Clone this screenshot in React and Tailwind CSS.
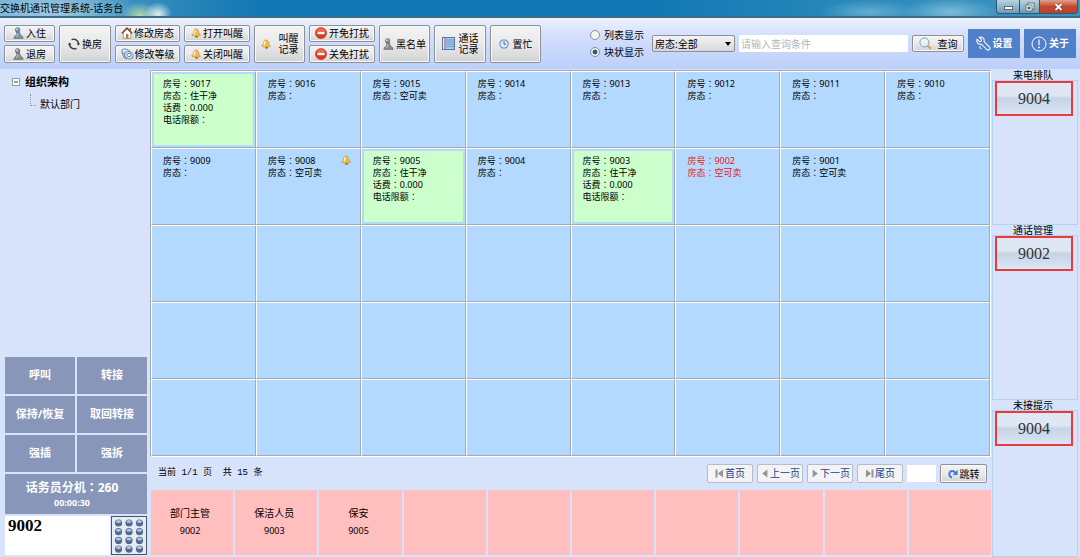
import { useState } from 'react';

const rooms = [
  { no: '9017', state: '住干净', fee: '0.000', occupied: true },
  { no: '9016', state: '' },
  { no: '9015', state: '空可卖' },
  { no: '9014', state: '' },
  { no: '9013', state: '' },
  { no: '9012', state: '' },
  { no: '9011', state: '' },
  { no: '9010', state: '' },
  { no: '9009', state: '' },
  { no: '9008', state: '空可卖', alarm: true },
  { no: '9005', state: '住干净', fee: '0.000', occupied: true },
  { no: '9004', state: '' },
  { no: '9003', state: '住干净', fee: '0.000', occupied: true },
  { no: '9002', state: '空可卖', busy: true },
  { no: '9001', state: '空可卖' },
];

const contacts = [
  { name: '部门主管', ext: '9002' },
  { name: '保洁人员', ext: '9003' },
  { name: '保安', ext: '9005' },
];

const callActions = ['呼叫', '转接', '保持/恢复', '取回转接', '强插', '强拆'];

function PersonIcon({ color }) {
  return (
    <svg width="11" height="12" viewBox="0 0 11 12" className="shrink-0">
      <path d="M3.6 5 C4.2 7 3.2 8.2 1.6 9.4 L0.8 11.4 H10.2 L9.6 9.6 C7.8 8.6 7 7 6.4 4.8 Z" fill={color} stroke="#46525a" strokeWidth="0.5" />
      <circle cx="4.6" cy="2.9" r="2.3" fill={color} stroke="#46525a" strokeWidth="0.5" />
      <circle cx="3.9" cy="2.2" r="0.9" fill="#fff" opacity="0.7" />
      <path d="M4.9 6 C5 7.6 4.4 8.8 3.2 10" stroke="#fff" strokeWidth="0.9" fill="none" opacity="0.6" />
    </svg>
  );
}

function BellIcon() {
  return (
    <svg width="10" height="10" viewBox="0 0 10 10" className="shrink-0">
      <circle cx="5.6" cy="8.4" r="1.3" fill="#8a4f12" />
      <path d="M5 0.8 C3 1 2.6 3 2.4 4.8 L0.6 7 C2.4 8.4 7.4 8.6 9.5 7.4 L8 5 C7.8 3 7 0.9 5 0.8 Z" fill="#efbd4a" stroke="#b98428" strokeWidth="0.5" />
      <path d="M4.3 2 C3.6 3 3.7 4.6 3 6.2" stroke="#fff6cf" strokeWidth="1.3" fill="none" />
    </svg>
  );
}

function SwapIcon() {
  return (
    <svg width="12" height="12" viewBox="0 0 12 12" className="shrink-0" fill="none" stroke="#333" strokeWidth="1.4">
      <path d="M3.6 1.6 A5 5 0 0 1 10.6 5.6" />
      <path d="M8.4 10.4 A5 5 0 0 1 1.4 6.4" />
      <path d="M8.6 5.2 H12 L10.4 7.8 Z M0 6.8 H3.4 L1.6 4.2 Z" fill="#333" stroke="none" />
    </svg>
  );
}

function HomeIcon() {
  return (
    <svg width="12" height="12" viewBox="0 0 12 12" className="shrink-0">
      <path d="M2.2 5.6 V11.3 H9.8 V5.6 L6 2 Z" fill="#fff" stroke="#8d7350" strokeWidth="0.7" />
      <path d="M0.7 6.4 L6 1 L11.3 6.4" fill="none" stroke="#7a4a25" strokeWidth="1.4" />
      <path d="M8.6 1 H10 V4 L8.6 2.7 Z" fill="#9a5a32" />
      <rect x="5" y="7" width="2.4" height="4.2" fill="#b9772f" />
    </svg>
  );
}

function LevelIcon() {
  return (
    <svg width="13" height="12" viewBox="0 0 13 12" className="shrink-0" fill="#d5e3f2" stroke="#5f7fa5" strokeWidth="0.9">
      <ellipse cx="5" cy="4" rx="4.3" ry="2.8" transform="rotate(25 5 4)" />
      <path d="M0.9 4.6 L3 9.6 L6 10.8" />
      <ellipse cx="7.8" cy="7.2" rx="4.4" ry="3.6" transform="rotate(25 7.8 7.2)" />
      <ellipse cx="8" cy="7" rx="2.2" ry="1.6" fill="#f6faff" />
    </svg>
  );
}

function StopIcon() {
  return (
    <svg width="12" height="12" viewBox="0 0 12 12" className="shrink-0">
      <circle cx="6" cy="6" r="5.6" fill="#dc3a1c" stroke="#a82f16" strokeWidth="0.5" />
      <path d="M1.4 4.6 A4.8 4.8 0 0 1 10.6 4.6 Z" fill="#f0836a" opacity="0.7" />
      <rect x="2.4" y="4.8" width="7.2" height="2.4" fill="#fff" />
    </svg>
  );
}

function NotebookIcon() {
  return (
    <svg width="13" height="13" viewBox="0 0 13 13" className="shrink-0">
      <rect x="0.5" y="0.5" width="12" height="12" fill="#a9cbee" stroke="#5378a8" />
      <path d="M4 3 H12 M4 5.2 H12 M4 7.4 H12 M4 9.6 H12" stroke="#5c8cc4" strokeWidth="0.8" />
      <path d="M3 1 V12" stroke="#d2564a" strokeWidth="0.9" />
      <path d="M1.5 1 V12" stroke="#e6f1fc" />
    </svg>
  );
}

function ClockIcon() {
  return (
    <svg width="10" height="10" viewBox="0 0 10 10" className="shrink-0">
      <circle cx="5" cy="5" r="4.2" fill="#dfeafa" stroke="#7c98c6" strokeWidth="1.2" />
      <path d="M5 2.4 V5.2 H7" stroke="#38507e" fill="none" strokeWidth="0.9" />
    </svg>
  );
}

function SearchIcon() {
  return (
    <svg width="13" height="13" viewBox="0 0 13 13" className="shrink-0">
      <path d="M8.8 8.8 L11.8 11.8" stroke="#d2a542" strokeWidth="2.2" />
      <circle cx="5.4" cy="5.4" r="4.5" fill="#e4f1fb" stroke="#8b97a5" />
      <path d="M3 5 A2.6 2.6 0 0 1 5.6 2.8" stroke="#fff" fill="none" strokeWidth="1.2" />
    </svg>
  );
}

function WrenchIcon() {
  return (
    <svg width="15" height="15" viewBox="0 0 16 16" className="shrink-0" fill="none" stroke="#fff" strokeWidth="1.1" strokeLinejoin="round">
      <path d="M3.4 1.2 L6 3.8 L5.6 5.6 L3.8 6 L1.2 3.4 C0.2 6 1.8 8.8 4.6 8.9 L5.8 8.7 L11.4 14.4 C12.4 15.3 14 15 14.6 14 C15.1 13.2 14.9 12.2 14.2 11.5 L8.6 6 C9.4 2.8 6.6 0.2 3.4 1.2 Z" />
      <path d="M4.8 10.8 C3.6 12 4.4 13.6 5.8 13.4" />
    </svg>
  );
}

function AboutIcon() {
  return (
    <svg width="16" height="16" viewBox="0 0 16 16" className="shrink-0" fill="none" stroke="#fff">
      <circle cx="8" cy="8" r="7" strokeWidth="1" />
      <path d="M8 3.6 V9.2" strokeWidth="1.2" />
      <circle cx="8" cy="11.4" r="0.9" fill="#fff" stroke="none" />
    </svg>
  );
}

function PageIcon({ kind }) {
  return (
    <svg width="9" height="9" viewBox="0 0 9 9" className="shrink-0" fill="#959595">
      {kind === 'first' && <path d="M0.5 0.5 H2.5 V8.5 H0.5 Z M8 0.5 V8.5 L2.8 4.5 Z" />}
      {kind === 'prev' && <path d="M7.4 0.5 V8.5 L2.2 4.5 Z" />}
      {kind === 'next' && <path d="M2.6 0.5 V8.5 L7.8 4.5 Z" />}
      {kind === 'last' && <path d="M6.5 0.5 H8.5 V8.5 H6.5 Z M1 0.5 V8.5 L6.2 4.5 Z" />}
    </svg>
  );
}

function JumpIcon() {
  return (
    <svg width="10" height="10" viewBox="0 0 10 10" className="shrink-0">
      <path d="M4 8.6 C0.2 7.4 0.6 2 4.4 2 C6 2 6.8 3 7.4 4" fill="none" stroke="#3f78d8" strokeWidth="1.8" />
      <path d="M9.6 0.8 V6 H4.6 Z" fill="#3f78d8" />
    </svg>
  );
}

function KeypadIcon() {
  return (
    <svg width="32" height="36" viewBox="0 0 32 36">
      {[0, 1, 2, 3].map((row) =>
        [0, 1, 2].map((col) => (
          <g key={`${row}-${col}`}>
            <circle cx={5.5 + col * 10.5} cy={5 + row * 8.7} r="3.6" fill="#50698f" />
            <ellipse cx={5.5 + col * 10.5} cy={3.5 + row * 8.7} rx="2.5" ry="1.5" fill="#b4c4dc" />
          </g>
        ))
      )}
    </svg>
  );
}

function ToolButton({ icon, children, className = 'gap-0.5' }) {
  return (
    <button
      className={`flex items-center justify-center rounded-xs border border-[#8e9097] bg-linear-to-b from-[#f4f4f4] via-[#e9e9ea] to-[#d2d3d6] leading-3 whitespace-nowrap shadow-[inset_0_0_0_1px_#f8f8f8] ${className}`}
    >
      {icon}
      <span>{children}</span>
    </button>
  );
}

function TwoLines({ first, second }) {
  return (
    <span className="flex flex-col gap-px text-[10px] leading-[10px]">
      <span className="font-['Noto_Sans_CJK_SC',sans-serif]">{first}</span>
      <span className="font-['Noto_Sans_CJK_SC',sans-serif]">{second}</span>
    </span>
  );
}

function ButtonPair({ children, className }) {
  return <div className={`grid grid-rows-2 gap-[3px] ${className}`}>{children}</div>;
}

function TitleBar() {
  return (
    <header className="flex h-[18px] items-start justify-between border-b-2 border-[#3d6f8c] bg-[radial-gradient(ellipse_90px_24px_at_50px_10px,#a5cfe6,transparent),radial-gradient(ellipse_14px_12px_at_158px_14px,#e6f1f0,transparent),radial-gradient(ellipse_18px_14px_at_140px_16px,#b5dba8,transparent),radial-gradient(ellipse_50px_12px_at_870px_12px,#63add1,transparent),radial-gradient(ellipse_50px_14px_at_950px_12px,#7bbbd9,transparent),linear-gradient(to_right,#62a9cf,#2583b8_18%,#1277b3_24%,#1277b3_60%,#2b8abb_80%,#3d93bf)]">
      <h1 className="leading-4">交换机通讯管理系统-话务台</h1>
      <div className="mr-0.5 flex h-[14px] overflow-hidden rounded-b border border-t-0 border-[#34546a]">
        <button aria-label="最小化" className="flex w-[23px] items-end justify-center border-r border-[#34546a] bg-linear-to-b from-[#b8d3e1] to-[#719cb5] pb-[3px]">
          <span className="h-1 w-[9px] border border-[#5a6b77] bg-white"></span>
        </button>
        <button aria-label="还原" className="flex w-[20px] items-center justify-center border-r border-[#34546a] bg-linear-to-b from-[#b8d3e1] to-[#719cb5]">
          <svg width="10" height="10" viewBox="0 0 10 10" fill="#fff" stroke="#4d5c68" strokeWidth="0.8">
            <rect x="3" y="1" width="6" height="6" />
            <rect x="1" y="3" width="6" height="6" />
            <rect x="3" y="5" width="2" height="2" fill="#4d5c68" />
          </svg>
        </button>
        <button aria-label="关闭" className="flex w-[37px] items-center justify-center bg-linear-to-b from-[#dda08f] via-[#c5462c] to-[#b8452c]">
          <svg width="9" height="8" viewBox="0 0 9 8">
            <path d="M1.5 1 L7.5 7 M7.5 1 L1.5 7" stroke="#5d3a38" strokeWidth="3" />
            <path d="M1.5 1 L7.5 7 M7.5 1 L1.5 7" stroke="#fff" strokeWidth="1.8" />
          </svg>
        </button>
      </div>
    </header>
  );
}

function Toolbar() {
  const [view, setView] = useState('block');

  return (
    <div className="flex h-[52px] items-center border-b border-[#d7e3fb] bg-linear-to-b from-[#eef2fd] from-0% via-[#d3dffc] via-35% to-[#bccffa] pr-1 pl-1">
      <div className="flex h-[38px] gap-1">
        <ButtonPair className="w-[51px]">
          <ToolButton icon={<PersonIcon color="#6f9aa6" />}>入住</ToolButton>
          <ToolButton icon={<PersonIcon color="#8b8b8b" />}>退房</ToolButton>
        </ButtonPair>
        <ToolButton className="w-[52px] gap-0.5" icon={<SwapIcon />}>换房</ToolButton>
        <ButtonPair className="w-[65px]">
          <ToolButton className="gap-px" icon={<HomeIcon />}>修改房态</ToolButton>
          <ToolButton className="gap-px" icon={<LevelIcon />}>修改等级</ToolButton>
        </ButtonPair>
        <ButtonPair className="w-[66px]">
          <ToolButton icon={<BellIcon />}>打开叫醒</ToolButton>
          <ToolButton icon={<BellIcon />}>关闭叫醒</ToolButton>
        </ButtonPair>
        <ToolButton className="w-[51px] gap-2" icon={<BellIcon />}><TwoLines first="叫醒" second="记录" /></ToolButton>
        <ButtonPair className="w-[66px]">
          <ToolButton icon={<StopIcon />}>开免打扰</ToolButton>
          <ToolButton icon={<StopIcon />}>关免打扰</ToolButton>
        </ButtonPair>
        <ToolButton className="w-[51px] gap-0.5" icon={<PersonIcon color="#8b8b8b" />}>黑名单</ToolButton>
        <ToolButton className="w-[52px] gap-1" icon={<NotebookIcon />}><TwoLines first="通话" second="记录" /></ToolButton>
        <ToolButton className="w-[51px] gap-1" icon={<ClockIcon />}>置忙</ToolButton>
      </div>

      <fieldset className="ml-[49px] flex flex-col gap-1">
        <label className="flex items-center gap-1 leading-[13px]">
          <input type="radio" name="view" className="size-[10px] appearance-none rounded-full border border-[#8a8f98] bg-[#f2f2f2] checked:bg-[radial-gradient(circle,#2c5a74_35%,#e8eef2_50%)]" checked={view === 'list'} onChange={() => setView('list')} />
          列表显示
        </label>
        <label className="flex items-center gap-1 leading-[13px]">
          <input type="radio" name="view" className="size-[10px] appearance-none rounded-full border border-[#8a8f98] bg-[#f2f2f2] checked:bg-[radial-gradient(circle,#2c5a74_35%,#e8eef2_50%)]" checked={view === 'block'} onChange={() => setView('block')} />
          块状显示
        </label>
      </fieldset>

      <div className="ml-2 grid flex-1 grid-cols-[83px_1fr_52px] items-center gap-1">
        <div className="relative">
          <select aria-label="房态" className="h-[17px] w-full appearance-none rounded-xs border border-[#8e9097] bg-linear-to-b from-[#f4f4f4] to-[#d6d7da] pl-0.5 leading-[14px]">
            <option>房态:全部</option>
          </select>
          <svg width="6" height="4" viewBox="0 0 6 4" className="pointer-events-none absolute top-[7px] right-1">
            <path d="M0 0 H6 L3 4 Z" />
          </svg>
        </div>
        <input aria-label="查询条件" placeholder="请输入查询条件" className="h-[17px] w-full bg-white px-0.5 leading-[14px] placeholder:text-[#b5b5b5]" />
        <ToolButton className="h-[17px] gap-[6px]" icon={<SearchIcon />}>查询</ToolButton>
      </div>

      <div className="ml-1 flex gap-1 font-bold text-white">
        <button className="flex h-[29px] w-[52px] items-center justify-center gap-0.5 bg-[#5080ca]">
          <WrenchIcon />
          设置
        </button>
        <button className="flex h-[29px] w-[52px] items-center justify-center gap-0.5 bg-[#5080ca]">
          <AboutIcon />
          关于
        </button>
      </div>
    </div>
  );
}

function Sidebar() {
  return (
    <aside className="flex w-[150px] shrink-0 flex-col justify-between pr-[3px] pb-[2px] pl-[5px]">
      <div className="pt-1 pl-[7px]">
        <div className="flex items-center gap-[5px] text-[11px] leading-4 font-bold">
          <svg width="8" height="8" viewBox="0 0 8 8">
            <rect x="0.5" y="0.5" width="7" height="7" fill="#fff" stroke="#9a9a9a" />
            <path d="M2 4 H6" stroke="#333" />
          </svg>
          组织架构
        </div>
        <div className="mt-1 flex items-start gap-1 pl-[18px]">
          <span className="h-3 w-[6px] border-b border-l border-dotted border-[#999]"></span>
          <span className="leading-5">默认部门</span>
        </div>
      </div>

      <div>
        <div className="grid grid-cols-2 gap-0.5 text-[11px] font-bold text-white">
          {callActions.map((name) => (
            <button key={name} className="h-[37px] bg-[#8896b9]">{name}</button>
          ))}
        </div>
        <div className="mt-0.5 flex h-10 flex-col justify-center bg-[#8896b9] pr-2 text-center font-bold text-white">
          <p className="text-[12px] leading-4">
            话务员分机<Colon />260
          </p>
          <p className="text-[9px] leading-[14px]">00:00:30</p>
        </div>
        <div className="mt-0.5 flex h-[39px] gap-px">
          <textarea aria-label="号码" defaultValue="9002" className="min-w-0 flex-1 resize-none bg-white px-[3px] font-['Liberation_Serif',serif] text-[17px] leading-[20px] font-bold"></textarea>
          <button aria-label="拨号键盘" className="flex w-[36px] items-center justify-center border border-[#4b5563] bg-[#e6ecf5]">
            <KeypadIcon />
          </button>
        </div>
      </div>
    </aside>
  );
}

// the TC face centres the full-width colon
function Colon() {
  return <span lang="zh-TW" className="font-['Noto_Sans_CJK_TC',sans-serif]">：</span>;
}

function RoomCell({ room }) {
  return (
    <div className="flex border-t border-r border-b border-l border-t-white border-r-[#a5a9b0] border-b-[#a5a9b0] border-l-white bg-[#b3d9ff] p-0.5">
      {room && (
        <div className={`flex flex-1 items-start justify-between py-1 pr-[7px] pl-[9px] text-[9px] leading-3 ${room.occupied ? 'bg-[#ccffcc]' : ''} ${room.busy ? 'text-[#f01414]' : ''}`}>
          <div>
            <p>房号<Colon />{room.no}</p>
            <p>房态<Colon />{room.state}</p>
            {room.fee && <p>话费<Colon />{room.fee}</p>}
            {room.fee && <p>电话限额<Colon /></p>}
          </div>
          {room.alarm && <BellIcon />}
        </div>
      )}
    </div>
  );
}

function Pager() {
  const pages = [
    ['first', '首页'],
    ['prev', '上一页'],
    ['next', '下一页'],
    ['last', '尾页'],
  ];

  return (
    <div className="flex h-[33px] items-center justify-between pr-1 pl-2">
      <p className="font-['Liberation_Mono','Noto_Sans_CJK_SC',monospace] text-[9px] whitespace-pre">当前 1/1 页  共 15 条</p>
      <div className="flex items-center gap-1">
        {pages.map(([kind, label]) => (
          <button key={kind} className="flex h-[19px] w-[46px] items-center justify-center gap-px rounded-xs border border-[#b9bcc4] bg-[#f3f4f6] whitespace-nowrap text-[#25418c]">
            <PageIcon kind={kind} />
            {label}
          </button>
        ))}
        <input aria-label="页码" className="h-[17px] w-[29px] bg-white" />
        <ToolButton className="h-[19px] w-[47px] gap-0.5" icon={<JumpIcon />}>跳转</ToolButton>
      </div>
    </div>
  );
}

function QueuePanel({ title, number, className }) {
  return (
    <section className={`flex min-h-0 flex-col ${className}`}>
      <h2 className="pr-1 text-center leading-[10px]">{title}</h2>
      <div className="flex-1 border border-[#b4d3f2] px-0.5">
        <button className="h-[35px] w-[78px] border-2 border-[#ea3a3c] bg-linear-to-b from-[#dfe7f5] from-40% via-[#c6d4e6] via-50% to-[#dae5f5] font-['Liberation_Serif',serif] text-[16px] text-[#333]">
          {number}
        </button>
      </div>
    </section>
  );
}

export default function App() {
  const cells = Array.from({ length: 40 }, (_, i) => rooms[i]);
  const slots = Array.from({ length: 10 }, (_, i) => contacts[i]);

  return (
    <div lang="zh-CN" className="flex min-h-screen flex-col bg-[#d7e3fb] font-['Noto_Sans','Noto_Sans_CJK_SC',sans-serif] text-[10px] text-black">
      <TitleBar />
      <Toolbar />
      <div className="flex flex-1">
        <Sidebar />
        <main className="flex min-w-0 flex-1 flex-col pr-px">
          <div className="grid flex-1 grid-cols-8 grid-rows-5 border border-[#a5a9b0] border-r-white border-b-white">
            {cells.map((room, i) => (
              <RoomCell key={i} room={room} />
            ))}
          </div>
          <Pager />
          <div className="mb-0.5 ml-px grid h-[65px] grid-cols-10 gap-0.5">
            {slots.map((slot, i) => (
              <div key={i} className="bg-[#ffbfbf] pt-[15px] pr-1 text-center">
                {slot && <p className="leading-4">{slot.name}</p>}
                {slot && <p className="mt-1 text-[9px] leading-3">{slot.ext}</p>}
              </div>
            ))}
          </div>
        </main>
        <aside className="flex w-[88px] shrink-0 flex-col pr-0.5">
          <QueuePanel title="来电排队" number="9004" className="flex-[155]" />
          <QueuePanel title="通话管理" number="9002" className="flex-[175]" />
          <QueuePanel title="未接提示" number="9004" className="flex-[157]" />
        </aside>
      </div>
    </div>
  );
}
